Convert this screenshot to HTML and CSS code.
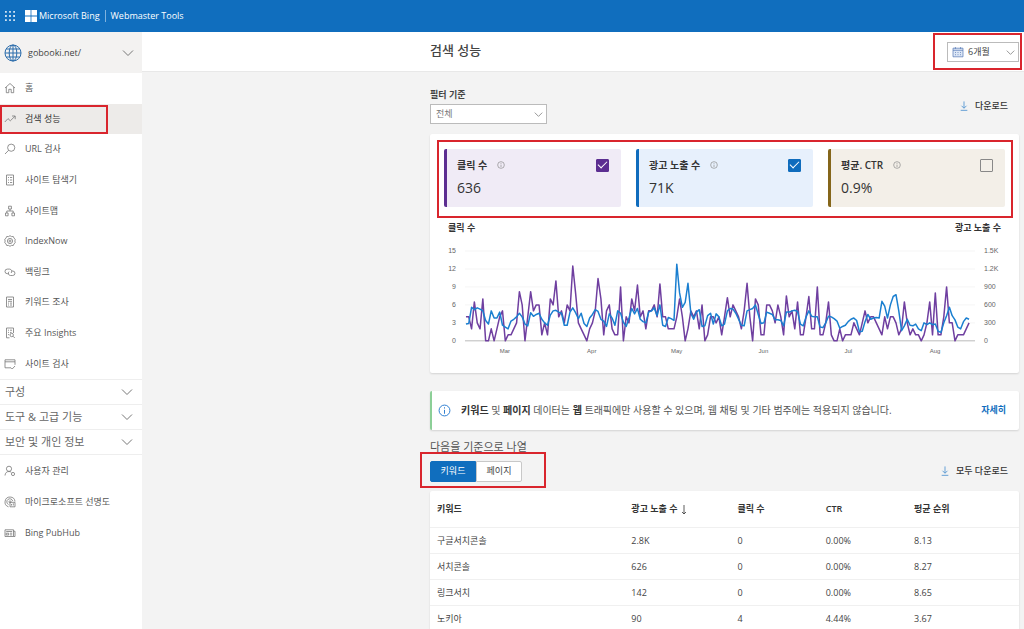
FILE: index.html
```html
<!DOCTYPE html>
<html lang="ko">
<head>
<meta charset="utf-8">
<meta name="viewport" content="width=device-width, initial-scale=1">
<title>검색 성능 - Webmaster Tools</title>
<link rel="stylesheet" href="styles.css">
</head>
<body>
<svg class="defs" width="0" height="0" aria-hidden="true">
  <symbol id="chevron" viewBox="0 0 12 12"><path d="M1 3.5 6 8.5 11 3.5"/></symbol>
  <symbol id="info" viewBox="0 0 12 12"><circle cx="6" cy="6" r="5"/><path d="M6 5.4V9M6 3v1.2"/></symbol>
  <symbol id="download" viewBox="0 0 12 12"><path d="M6 .5V8.500M3 5.700 6 8.700 9 5.700M2 11.200H10"/></symbol>
</svg>
<div class="app">
  <header class="topbar">
    <button class="launcher" aria-label="앱 시작 관리자">
      <svg viewBox="0 0 11 11" width="10" height="10"><path d="M0 0h2v2H0zM4.500 0h2v2h-2zM9 0h2v2H9zM0 4.500h2v2H0zM4.500 4.500h2v2h-2zM9 4.500h2v2H9zM0 9h2v2H0zM4.500 9h2v2h-2zM9 9h2v2H9z"/></svg>
    </button>
    <svg class="mslogo" viewBox="0 0 12 12" width="12" height="12"><path d="M0 0h5.600v5.600H0zM6.400 0H12v5.600H6.400zM0 6.400h5.600V12H0zM6.400 6.400H12V12H6.400z"/></svg>
    <span class="brand">Microsoft Bing</span>
    <span class="product">Webmaster Tools</span>
  </header>

  <aside class="sidebar">
    <button class="site">
      <svg class="globe" viewBox="0 0 18 18" width="18" height="18"><circle cx="9" cy="9" r="8"/><ellipse cx="9" cy="9" rx="3.800" ry="8"/><path d="M9 1v16M1 9h16M2.200 5h13.600M2.200 13h13.600"/></svg>
      <span>gobooki.net/</span>
      <svg class="chev"><use href="#chevron"/></svg>
    </button>
    <nav>
      <ul class="menu">
        <li><a href="#"><svg viewBox="0 0 12 12"><path d="M1 6 6 1.500 11 6M2.300 5v5.700h2.500V7.300h2.400v3.400h2.500V5"/></svg>홈</a></li>
        <li class="current"><a href="#" aria-current="page"><svg viewBox="0 0 12 12"><path d="M.8 9 4 5.600 6.300 7.800 11 3.200M8 3h3.200v3.200"/></svg>검색 성능</a><span class="mark mark-nav"></span></li>
        <li><a href="#"><svg viewBox="0 0 12 12"><circle cx="7.200" cy="4.700" r="3.600"/><path d="M4.600 7.300 1 11"/></svg>URL 검사</a></li>
        <li><a href="#"><svg viewBox="0 0 12 12"><path d="M2.500 1h7v10h-7zM4 3.500h1M6 3.500h2.200M4 6h1M6 6h2.200M4 8.500h1M6 8.500h2.200"/></svg>사이트 탐색기</a></li>
        <li><a href="#"><svg viewBox="0 0 12 12"><path d="M4.600 1.200h2.800V4H4.600zM1.500 8h2.600v2.800H1.500zM7.900 8h2.600v2.800H7.900zM6 4v2M2.800 8V6h6.400v2"/></svg>사이트맵</a></li>
        <li><a href="#"><svg viewBox="0 0 12 12"><path d="M4.500 1.600 6 .7l1.500.9 1.800-.1.700 1.700 1.300 1.200L10.800 6l.5 1.600L10 8.800l-.7 1.700-1.800-.1-1.500.9-1.500-.9-1.800.1L2 8.800.7 7.600 1.200 6 .7 4.400 2 3.200l.7-1.700z"/><circle cx="6" cy="6" r="2.600"/><circle cx="6" cy="6" r="1"/></svg>IndexNow</a></li>
        <li><a href="#"><svg viewBox="0 0 12 12"><path d="M4.500 7.700H3.300a2.300 2.300 0 0 1 0-4.600h2.200a2.300 2.300 0 0 1 1.600 3.900M7.500 5h1.200a2.200 2.200 0 0 1 0 4.500H6.500A2.200 2.200 0 0 1 5 5.700"/></svg>백링크</a></li>
        <li><a href="#"><svg viewBox="0 0 12 12"><path d="M2.500 1h7v10h-7zM4 3.500h4M4 5.300h4M4 7.100h1M6 7.100h2M4 9h1M6 9h2"/></svg>키워드 조사</a></li>
        <li><a href="#"><svg viewBox="0 0 12 12"><path d="M5.500 10.800h-3V1h7v5M4 3.200h1M6 3.200h2M4 5.400h1M6 5.400h1.500M4 7.600h1"/><circle cx="7.700" cy="8" r="1.700"/><path d="m9 9.200 1.800 1.800"/></svg>주요 Insights</a></li>
        <li><a href="#"><svg viewBox="0 0 12 12"><path d="M7 9.800H1V1.800h10v5M1 3.800h10M7 9.800l1.200 1.200L11 8"/></svg>사이트 검사</a></li>
      </ul>
      <div class="groups">
        <button>구성<svg class="chev"><use href="#chevron"/></svg></button>
        <button>도구 &amp; 고급 기능<svg class="chev"><use href="#chevron"/></svg></button>
        <button>보안 및 개인 정보<svg class="chev"><use href="#chevron"/></svg></button>
      </div>
      <ul class="menu extra">
        <li><a href="#"><svg viewBox="0 0 12 12"><circle cx="5" cy="3.800" r="2.600"/><path d="M1 10.500c.2-2.600 1.700-4 4-4 1 0 1.700.3 2.300.8"/><circle cx="9" cy="9" r="1.600"/></svg>사용자 관리</a></li>
        <li><a href="#"><svg viewBox="0 0 12 12"><path d="M4.500 10.800A5 5 0 1 1 11 5.500M4.500 8.500A3 3 0 1 1 8.700 5M6 10.800V6.300h5v4.500zM7.500 9.500V8M9.300 9.500V7.300"/><circle cx="6" cy="5.800" r="1"/></svg>마이크로소프트 선명도</a></li>
        <li><a href="#"><svg viewBox="0 0 12 12"><path d="M1 2.800h8.500v6.700H1zM9.500 4.200H11v5.300H9.500M2.200 4.500h6M2.200 6.200h2.500v1.800H2.200zM6 6.200h2.200M6 7.900h2.200"/></svg>Bing PubHub</a></li>
      </ul>
    </nav>
  </aside>

  <main class="main">
    <div class="titlebar">
      <h1>검색 성능</h1>
      <div class="field date">
        <svg class="cal" viewBox="0 0 12 12"><path d="M1 2.200h10v8.600H1z"/><path d="M1 4.300h10M3.400 1v2M8.600 1v2M3 6.500h1M5.500 6.500h1M8 6.500h1M3 8.700h1M5.500 8.700h1M8 8.700h1"/></svg>
        <select aria-label="기간"><option>6개월</option></select>
        <svg class="chev small"><use href="#chevron"/></svg>
        <span class="mark mark-date"></span>
      </div>
    </div>

    <div class="content">
      <div class="filters">
        <div>
          <label for="filter">필터 기준</label>
          <div class="field">
            <select id="filter"><option>전체</option></select>
            <svg class="chev small"><use href="#chevron"/></svg>
          </div>
        </div>
        <button class="download"><svg><use href="#download"/></svg>다운로드</button>
      </div>

      <section class="card performance">
        <div class="metrics">
          <div class="metric clicks">
            <div class="metric-head"><label for="m1">클릭 수</label><svg><use href="#info"/></svg><input type="checkbox" id="m1" checked></div>
            <strong>636</strong>
          </div>
          <div class="metric views">
            <div class="metric-head"><label for="m2">광고 노출 수</label><svg><use href="#info"/></svg><input type="checkbox" id="m2" checked></div>
            <strong>71K</strong>
          </div>
          <div class="metric ctr">
            <div class="metric-head"><label for="m3">평균. CTR</label><svg><use href="#info"/></svg><input type="checkbox" id="m3"></div>
            <strong>0.9%</strong>
          </div>
          <span class="mark mark-metrics"></span>
        </div>
        <div class="axis-titles"><span>클릭 수</span><span>광고 노출 수</span></div>
        <svg class="chart" id="chart" viewBox="0 0 590 120" role="img" aria-label="클릭 수와 광고 노출 수"></svg>
      </section>

      <section class="card notice">
        <svg><use href="#info"/></svg>
        <p><b>키워드</b> 및 <b>페이지</b> 데이터는 <b>웹</b> 트래픽에만 사용할 수 있으며, 웹 채팅 및 기타 범주에는 적용되지 않습니다.</p>
        <a href="#">자세히</a>
      </section>

      <div class="sort-label">다음을 기준으로 나열</div>
      <div class="toolbar">
        <div class="toggle">
          <button class="on" aria-pressed="true">키워드</button><button aria-pressed="false">페이지</button>
          <span class="mark mark-toggle"></span>
        </div>
        <button class="download"><svg><use href="#download"/></svg>모두 다운로드</button>
      </div>

      <table class="card">
        <thead><tr><th class="c-key">키워드</th><th class="c-views">광고 노출 수<svg class="sort" viewBox="0 0 6 10"><path d="M3 0v9M1 7l2 2 2-2"/></svg></th><th class="c-num">클릭 수</th><th class="c-num">CTR</th><th>평균 순위</th></tr></thead>
        <tbody>
          <tr><td>구글서치콘솔</td><td>2.8K</td><td>0</td><td>0.00%</td><td>8.13</td></tr>
          <tr><td>서치콘솔</td><td>626</td><td>0</td><td>0.00%</td><td>8.27</td></tr>
          <tr><td>링크서치</td><td>142</td><td>0</td><td>0.00%</td><td>8.65</td></tr>
          <tr><td>노키아</td><td>90</td><td>4</td><td>4.44%</td><td>3.67</td></tr>
        </tbody>
      </table>
    </div>
  </main>
</div>
<script src="chart.js"></script>
</body>
</html>
```
FILE: styles.css
```css
* { box-sizing: border-box; }
body {
  margin: 0;
  font: 9px/16px "Open Sans", "Noto Sans CJK KR", sans-serif;
  color: #444;
}
button, select, input { font: inherit; color: inherit; margin: 0; padding: 0; }
button { background: none; border: 0; text-align: left; }
a { color: inherit; text-decoration: none; }
ul { list-style: none; margin: 0; padding: 0; }
h1, p { margin: 0; }
svg { fill: none; stroke: currentColor; flex: none; }
.defs { position: absolute; }

.app {
  display: grid;
  grid-template: 32px 1fr / 142px 1fr;
  height: 100vh;
  overflow: hidden;
}

.topbar {
  grid-column: 1 / -1;
  display: flex;
  align-items: center;
  background: #106ebe;
  color: #fff;
  font-weight: 500;
  padding-left: 5px;
}
.topbar svg { fill: currentColor; stroke: none; display: block; }
.launcher { opacity: .8; }
.mslogo { margin-left: 10px; }
.brand { margin-left: 2px; }
.product { margin-left: 5px; padding-left: 5px; line-height: 12px; border-left: 1px solid #7fb2de; }

.chev { width: 12px; height: 12px; margin-left: auto; color: #777; }
.chev.small { width: 9px; height: 9px; }

.sidebar { background: #fff; overflow: hidden; }
.site {
  display: flex;
  align-items: center;
  gap: 6px;
  width: 100%;
  height: 41px;
  padding: 0 8px 0 4px;
  background: #f3f2f1;
}
.globe { color: #2b6cab; }
.menu { display: grid; grid-auto-rows: 1fr; min-height: 306px; }
.menu li { display: grid; position: relative; }
.menu a { display: flex; align-items: center; gap: 9px; padding-left: 4px; color: #555; }
.menu svg { width: 12px; height: 12px; color: #777; stroke-width: .8; }
.menu .current { background: #edebe9; }
.menu .current a { color: #333; }
.menu.extra { min-height: 93px; }
.groups button {
  display: flex;
  align-items: center;
  width: 100%;
  height: 25px;
  padding: 0 9px 0 5px;
  border-top: 1px solid #eee;
  font-size: 11px;
  color: #666;
}
.groups { border-bottom: 1px solid #eee; }

.mark { position: absolute; border: 2px solid #d9252d; pointer-events: none; }
.mark-nav { inset: 1px 34px 0 0; }
.mark-date { inset: -9px -3px -8px -14px; }
.mark-metrics { inset: -9px -8px -11px -7px; }
.mark-toggle { inset: -9px -24px -6px -10px; }

.main { background: #f3f3f3; overflow: hidden; }
.titlebar {
  display: flex;
  align-items: center;
  justify-content: space-between;
  height: 40px;
  padding: 0 5px 0 288px;
  background: #fff;
  border-bottom: 1px solid #e8e8e8;
}
h1 { font-size: 13px; font-weight: 500; line-height: 20px; padding-bottom: 4px; }
.content { padding: 15px 5px 0 288px; }

.field { position: relative; width: 117px; height: 20px; }
.field select {
  appearance: none;
  width: 100%;
  height: 100%;
  padding-left: 5px;
  border: 1px solid #bbb;
  border-radius: 0;
  background: #fff;
  display: block;
}
.field .chev { position: absolute; right: 4px; top: 6px; pointer-events: none; }
.date { width: 72px; }
.date select { padding-left: 20px; }
.cal { position: absolute; left: 5px; top: 4px; width: 12px; height: 12px; color: #5577b5; stroke-width: .7; }
.cal path:first-child { fill: #dce6f5; }

.filters { display: flex; align-items: center; justify-content: space-between; }
.filters label { display: block; font-weight: 600; }
.filters .field { margin-top: 1px; color: #777; }
.download { display: flex; align-items: center; gap: 6px; font-weight: 500; color: #333; padding-right: 11px; }
.download svg { width: 10px; height: 10px; color: #4a90d0; }

.card { background: #fff; border-radius: 2px; box-shadow: 0 1px 2px #0002; }
.performance { margin-top: 10px; padding: 15px 0 13px; }
.metrics { position: relative; display: grid; grid-template-columns: repeat(3, 1fr); gap: 15px; margin: 0 14px; }
.metric { border-left: 3px solid; border-radius: 2px; padding: 8px 12px 8px 10px; height: 58px; }
.clicks { border-color: #5c2e91; background: #f0ebf6; }
.views { border-color: #0f6cbd; background: #e7f0fc; }
.ctr { border-color: #85661a; background: #f3efe8; }
.metric-head { display: flex; align-items: center; gap: 10px; }
.metric-head label { font-size: 10px; font-weight: 600; color: #333; }
.metric-head svg { width: 8px; height: 8px; color: #888; }
.metric-head input {
  appearance: none;
  display: grid;
  place-items: center;
  width: 13px;
  height: 13px;
  margin-left: auto;
  border: 1px solid #888;
  border-radius: 1px;
}
.clicks input { background: #5c2e91; border-color: #5c2e91; }
.views input { background: #0f6cbd; border-color: #0f6cbd; }
.metric-head input:checked::after {
  content: "";
  width: 8px;
  height: 4px;
  margin-bottom: 3px;
  border: solid #fff;
  border-width: 0 0 1px 1px;
  transform: rotate(-45deg);
}
.metric strong { display: block; font-size: 14px; line-height: 20px; font-weight: 500; color: #333; margin-top: 5px; }
.axis-titles { display: flex; justify-content: space-between; margin: 13px 18px 0; font-weight: 600; color: #333; }
.chart { display: block; width: 100%; margin-top: 4px; }
.chart text { font: 7px "Liberation Sans", Arial, sans-serif; fill: #666; stroke: none; }
.chart .month { font-size: 6px; text-anchor: middle; }
.chart .left { text-anchor: end; }
.chart .grid { stroke: #f5f5f5; }
.chart .base { stroke: #bbb; }
.chart polyline { stroke-width: 1.5; stroke-linejoin: round; }
.line-clicks { stroke: #6f3fa0; }
.line-views { stroke: #1a7fd0; }

.notice {
  display: flex;
  align-items: center;
  gap: 10px;
  margin-top: 18px;
  min-height: 39px;
  padding: 0 13px 0 6px;
  border-left: 2px solid #8ccf97;
}
.notice svg { width: 13px; height: 13px; color: #2b7cd0; stroke-width: .9; }
.notice p { flex: 1; font-size: 10px; color: #555; white-space: nowrap; }
.notice b { font-weight: 600; color: #333; }
.notice a { color: #106ebe; font-weight: 600; }

.sort-label { margin-top: 9px; font-size: 11px; color: #555; }
.toolbar { display: flex; align-items: center; justify-content: space-between; margin-top: 6px; }
.toggle { position: relative; display: flex; }
.toggle button { width: 46px; height: 21px; text-align: center; background: #fff; border: 1px solid #c8c8c8; border-radius: 0 2px 2px 0; }
.toggle .on { background: #106ebe; border-color: #106ebe; color: #fff; border-radius: 2px 0 0 2px; }

table { width: 100%; margin-top: 9px; border-collapse: collapse; table-layout: fixed; }
th, td { text-align: left; padding: 0 0 0 7px; height: 26px; border-bottom: 1px solid #f0f0f0; }
th { height: 37px; font-weight: 600; color: #333; }
td { color: #444; }
.c-key { width: 33%; }
.c-views { width: 18%; }
.c-num { width: 15%; }
.sort { width: 6px; height: 10px; margin-left: 4px; vertical-align: middle; stroke-width: .8; }
```
FILE: chart.js
```js
const clicks = [
  4,4,2,6.5,3,2,7,0,0,2,0,2,4,5,0,1,1,2,3,8.2,6,0,4,8.2,5,6,6,1,3,1,7,6,10,4,5,3,6,5,12.5,8,3,2,1,0,2,3,5,10.4,7,1,5,6,2,1,1,
  9,0,4,3,7,5,9.3,4,5,2,5,5,6,4,9.5,4,4,2,2,2,4,7,4,0,2,5,4,5,2,6,0,1,4,4,3,4,
  1,4,7.2,4,6,5,4,2,5,9.6,4,0,7,6,1,1,6,6,5,3,6,4,1,7.5,4,5,2,6.5,1,1,4,7.4,2,2,9,1,1,3,6.5,1,0,0,2,0,1,1,1,3,2,1,
  3,5,3,4,4,3,2,1,4,2,4,4,3,1,2,6.5,3,1,2,1,1,0,1,3,6.5,1,8,1,1,4,9,3,3,0,1,1,1,2,3
];
const views = [
  2.8,2.9,5.6,5.2,5.5,5.3,5,3.4,2.8,5,3.8,3.8,4.8,2.6,2.3,2,3.3,3.6,4,4.6,4,2.8,2.5,4.7,4.1,4.4,4.6,3.6,3,2.6,4.3,5,5.1,4.8,4.6,
  2.6,2.6,4.8,5.5,4.7,3.7,4.6,2.9,2.4,3.8,4.4,5.2,4.9,3.6,3.3,2.4,4.5,3.8,2.6,5,4.6,3.1,2.4,3.8,5.4,4.5,5.4,3.6,3.2,3,4.8,5,5.5,
  4.2,6,2.6,2.4,3.9,3.7,3.4,12.8,8,5.6,6.4,9.6,4.6,3.6,4.8,5.2,2.4,2.5,4.2,4.6,2.8,4.5,4,
  2.5,2.8,5,5.4,5.3,4.6,3.6,2.6,2.5,5,5.2,5.4,6,4.4,2.9,3,4.8,4.6,4.4,3.5,3.5,3.4,2.5,4.8,4.8,5,5.1,4.9,2.8,2.5,
  4,5,4.1,4,4,2.3,2.2,3,4.1,4,3.7,3.3,2.1,2.4,2.6,3.2,3.6,3.8,3.4,1.5,1.6,3.2,4.4,3.6,3.8,3.9,3.8,6.6,5.8,3.8,
  6,7.4,7.7,5,1.7,2.5,3.6,2.6,2.5,2.8,2,1.7,3,2.7,3,2.7,2.8,1.6,1.4,3,4.2,5.6,4.2,3.5,2.3,2,3.2,3.8,3.6
];
const left = 36, right = 540, bottom = 101, unit = 6;
const y = v => bottom - v * unit;
const line = (data, name) => {
  const step = (right - left) / (data.length - 1);
  const points = data.map((v, i) => (left + i * step).toFixed(1) + "," + y(v).toFixed(1)).join(" ");
  return `<polyline class="${name}" points="${points}"/>`;
};
let out = "";
["0", "300", "600", "900", "1.2K", "1.5K"].forEach((label, i) => {
  const gy = y(i * 3);
  out += `<path class="${i ? "grid" : "base"}" d="M${left - 1} ${gy}H546"/>`;
  out += `<text class="left" x="26" y="${gy + 2}">${i * 3}</text><text x="555" y="${gy + 2}">${label}</text>`;
});
[["Mar", 75], ["Apr", 162], ["May", 247], ["Jun", 334], ["Jul", 419], ["Aug", 506]].forEach(([m, x]) => {
  out += `<text class="month" x="${x}" y="113">${m}</text>`;
});
document.getElementById("chart").innerHTML = out + line(clicks, "line-clicks") + line(views, "line-views");
```
